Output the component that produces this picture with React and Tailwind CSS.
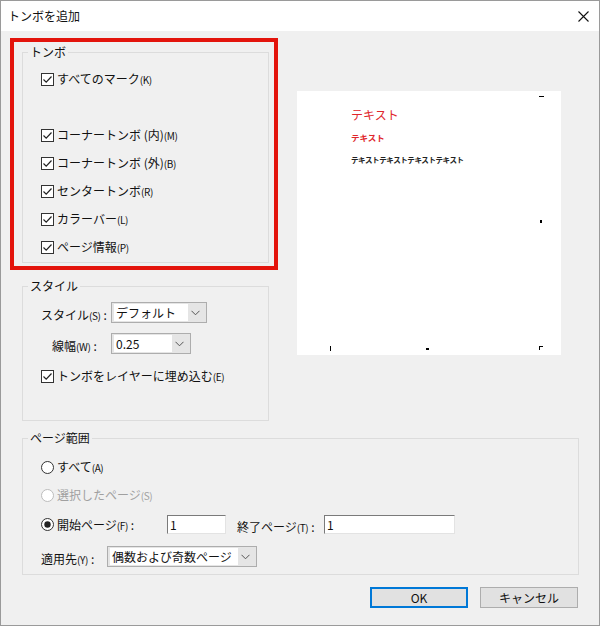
import React from "react";

const FONT = { fontFamily: '"Noto Sans CJK JP", "Noto Sans", sans-serif' };

// checkbox square with tick mark
function CheckBox() {
  return (
    <svg width="13" height="13" viewBox="0 0 13 13" className="shrink-0">
      <rect x="0.5" y="0.5" width="12" height="12" fill="#fff" stroke="#333" />
      <path d="M2.5 6.5 L5.2 9.2 L10.5 3.5" fill="none" stroke="#222" strokeWidth="1.2" />
    </svg>
  );
}

function Radio({ checked, disabled }) {
  const c = disabled ? "#bcbcbc" : "#333";
  return (
    <svg width="13" height="13" viewBox="0 0 13 13" className="shrink-0">
      <circle cx="6.5" cy="6.5" r="6" fill="#fff" stroke={c} />
      {checked && <circle cx="6.5" cy="6.5" r="3.2" fill="#222" />}
    </svg>
  );
}

function Chevron() {
  return (
    <svg width="9" height="6" viewBox="0 0 9 6">
      <path d="M0.5 0.8 L4.5 4.8 L8.5 0.8" fill="none" stroke="#555" strokeWidth="1" />
    </svg>
  );
}

// label text with the small access-key suffix, e.g. "(K)"
function Label({ text, k, colon, disabled }) {
  return (
    <span className={`text-[12px] leading-none whitespace-nowrap ${disabled ? "text-[#a0a0a0]" : "text-[#111]"}`}>
      {text}
      <span className="text-[10px] tracking-[-0.4px]">({k})</span>
      {colon && <span className="ml-[3px]">:</span>}
    </span>
  );
}

function CheckRow({ text, k }) {
  return (
    <div className="h-[28px] flex items-center gap-[3px] pl-[18px]">
      <CheckBox />
      <Label text={text} k={k} />
    </div>
  );
}

function Group({ title, className, children }) {
  return (
    <div className={`relative border border-[#dcdcdc] ${className}`}>
      <span className="absolute -top-[9px] left-[5px] bg-[#f0f0f0] px-[2px] text-[12px] leading-[16px] text-[#111]">
        {title}
      </span>
      {children}
    </div>
  );
}

function Select({ value, width, white }) {
  return (
    <div
      className="h-[21px] border border-[#adadad] bg-[#e5e5e5] flex items-center pl-[2px] pr-[6px]"
      style={{ width }}
    >
      <div className="h-[17px] bg-white flex items-center pl-[2px] text-[12px] leading-none text-[#111]" style={{ width: white }}>
        {value}
      </div>
      <div className="flex-1 flex justify-end">
        <Chevron />
      </div>
    </div>
  );
}

function TextBox({ width }) {
  return (
    <div
      className="h-[19px] bg-white border border-[#7a7a7a] border-r-[#e3e3e3] border-b-[#e3e3e3] flex items-center pl-[2px] text-[12px] leading-none text-[#111]"
      style={{ width }}
    >
      1
    </div>
  );
}

export default function App() {
  return (
    <div style={FONT} className="w-[600px] h-[626px] flex flex-col border border-[#9a9a9a] bg-[#f0f0f0] overflow-hidden">
      {/* title bar */}
      <div className="h-[30px] bg-white flex items-center justify-between pl-[7px] pr-[10px]">
        <span className="text-[12px] leading-none text-[#111]">トンボを追加</span>
        <svg width="11" height="11" viewBox="0 0 11 11">
          <path d="M0.5 0.5 L10.5 10.5 M10.5 0.5 L0.5 10.5" stroke="#111" strokeWidth="1.1" />
        </svg>
      </div>

      <div className="flex-1 flex flex-col pt-[7px]">
        <div className="flex">
          {/* left column */}
          <div className="flex flex-col ml-[9px] w-[268px]">
            <div className="h-[232px] border-4 border-[#e3140c] pt-[10px] px-[8px]">
              <Group title="トンボ" className="h-[211px] w-[247px] pt-[12px]">
                <CheckRow text="すべてのマーク" k="K" />
                <div className="h-[28px]" />
                <CheckRow text="コーナートンボ (内)" k="M" />
                <CheckRow text="コーナートンボ (外)" k="B" />
                <CheckRow text="センタートンボ" k="R" />
                <CheckRow text="カラーバー" k="L" />
                <CheckRow text="ページ情報" k="P" />
              </Group>
            </div>

            <Group title="スタイル" className="mt-[16px] ml-[12px] w-[247px] h-[135px] pt-[15px]">
              <div className="flex items-center h-[21px]">
                <div className="w-[88px] pl-[18px]">
                  <Label text="スタイル" k="S" colon />
                </div>
                <Select value="デフォルト" width={96} white={74} />
              </div>
              <div className="flex items-center h-[21px] mt-[10px]">
                <div className="w-[88px] pl-[29px]">
                  <Label text="線幅" k="W" colon />
                </div>
                <Select value="0.25" width={80} white={58} />
              </div>
              <div className="h-[22px] mt-[11px] flex items-center gap-[3px] pl-[18px]">
                <CheckBox />
                <Label text="トンボをレイヤーに埋め込む" k="E" />
              </div>
            </Group>
          </div>

          {/* preview page */}
          <div className="ml-[19px] mt-[53px] w-[264px] h-[264px] bg-white relative">
            <div className="pl-[54px] pt-[16px] flex flex-col">
              <span className="text-[12px] leading-[16px] text-[#e0262b]">テキスト</span>
              <span className="mt-[9px] text-[8.5px] leading-[10px] font-bold text-[#e0262b]">テキスト</span>
              <span className="mt-[13px] text-[7.5px] leading-[9px] font-bold text-[#222] tracking-[-0.4px]">
                テキストテキストテキストテキスト
              </span>
            </div>
            {/* crop marks */}
            <span className="absolute left-[242px] top-[5px] w-[5px] h-[1px] bg-black" />
            <span className="absolute left-[243px] top-[129px] w-[2px] h-[3px] bg-black" />
            <span className="absolute left-[33px] top-[255px] w-[1px] h-[5px] bg-black" />
            <span className="absolute left-[129px] top-[257px] w-[3px] h-[2px] bg-black" />
            <span className="absolute left-[242px] top-[255px] w-[4px] h-[1px] bg-black" />
            <span className="absolute left-[242px] top-[255px] w-[1px] h-[4px] bg-black" />
          </div>
        </div>

        {/* page range */}
        <Group title="ページ範囲" className="mt-[17px] ml-[21px] w-[557px] h-[137px] pt-[21px]">
          <div className="h-[14px] flex items-center gap-[3px] pl-[18px]">
            <Radio />
            <Label text="すべて" k="A" />
          </div>
          <div className="h-[14px] mt-[14px] flex items-center gap-[3px] pl-[18px]">
            <Radio disabled />
            <Label text="選択したページ" k="S" disabled />
          </div>
          <div className="h-[19px] mt-[13px] flex items-center pl-[18px]">
            <div className="w-[126px] flex items-center gap-[3px]">
              <Radio checked />
              <Label text="開始ページ" k="F" colon />
            </div>
            <TextBox width={59} />
            <div className="w-[98px] pl-[11px]">
              <Label text="終了ページ" k="T" colon />
            </div>
            <TextBox width={131} />
          </div>
          <div className="h-[21px] mt-[12px] flex items-center pl-[18px]">
            <div className="w-[66px]">
              <Label text="適用先" k="Y" colon />
            </div>
            <Select value="偶数および奇数ページ" width={150} white={128} />
          </div>
        </Group>

        {/* buttons */}
        <div className="flex justify-end gap-[12px] mt-[12px] pr-[21px]">
          <button className="w-[98px] h-[21px] border-2 border-[#0078d7] bg-[#e1e1e1] text-[12px] leading-none text-[#111]">
            OK
          </button>
          <button className="w-[98px] h-[21px] border border-[#adadad] bg-[#e1e1e1] text-[12px] leading-none text-[#111]">
            キャンセル
          </button>
        </div>
      </div>
    </div>
  );
}
